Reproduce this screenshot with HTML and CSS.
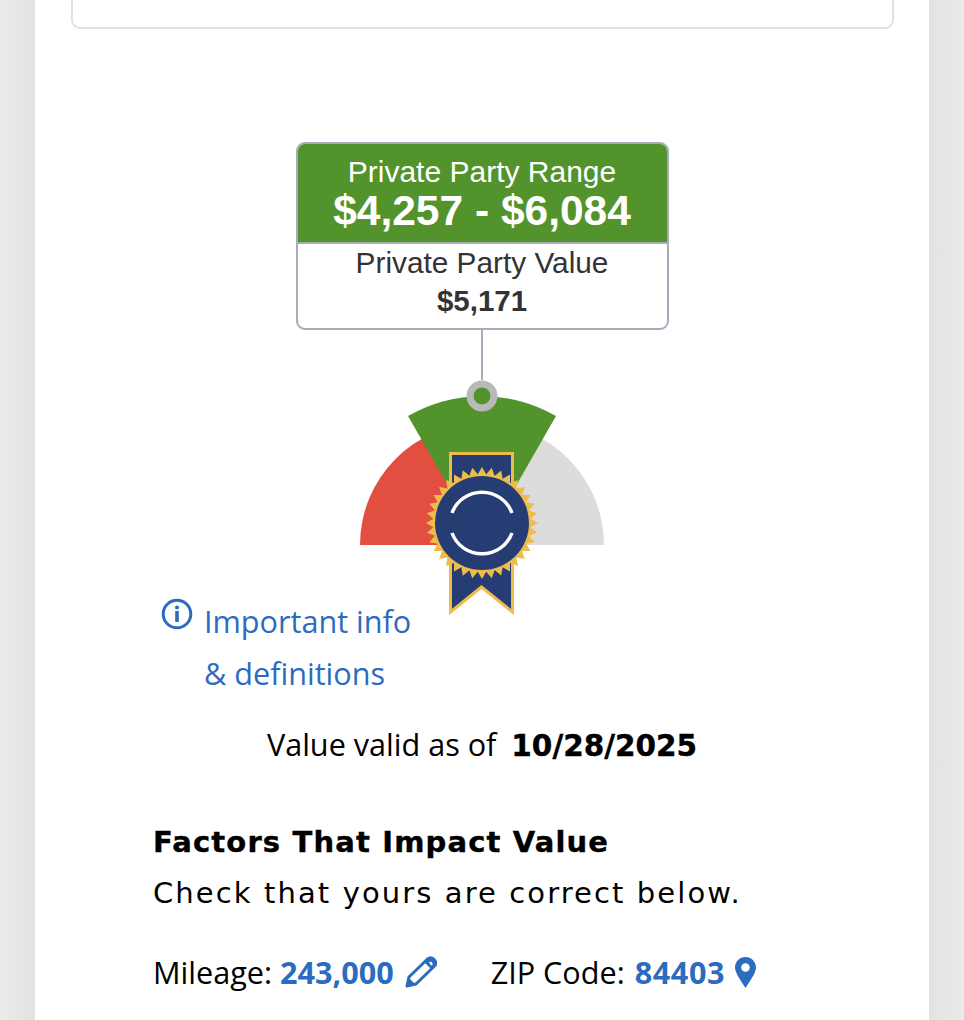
FILE: index.html
```html
<!DOCTYPE html>
<html lang="en">
<head>
  <meta charset="UTF-8">
  <meta name="viewport" content="width=device-width, initial-scale=1.0">
  <title>Private Party Value</title>
  <link rel="stylesheet" href="styles.css">
</head>
<body>
  <main class="page">
    <div class="card-stub"></div>

    <section class="value-box">
      <div class="value-box-head">
        <div class="range-label">Private Party Range</div>
        <div class="range-value">$4,257 - $6,084</div>
      </div>
      <div class="value-box-body">
        <div class="value-label">Private Party Value</div>
        <div class="value-amount">$5,171</div>
      </div>
    </section>
    <div class="connector"></div>

    <div class="chart">
      <!-- gauge and ribbon badge, origin is 360,380 on the page -->
      <svg class="gauge" width="244" height="236" viewBox="0 0 244 236" xmlns="http://www.w3.org/2000/svg">
        <path fill="#e24e3f" d="M0 165 A122 122 0 0 1 122 43 L122 165 Z"/>
        <path fill="#dcdcdc" d="M244 165 A122 122 0 0 0 122 43 L122 165 Z"/>
        <path fill="#52932b" d="M122 165 L48 36 A148 148 0 0 1 196 36 Z"/>
        <circle cx="122" cy="16" r="12" fill="#52932b" stroke="#b9b9b9" stroke-width="7"/>
        <polygon points="90.5,73.5 152.5,73.5 152.5,232 121.5,207 90.5,232" fill="#253d73" stroke="#eebc4a" stroke-width="3"/>
        <g fill="#eebc4a" transform="translate(122 143)">
          <polygon points="0,-56 48.5,28 -48.5,28"/>
          <polygon points="0,-56 48.5,28 -48.5,28" transform="rotate(10)"/>
          <polygon points="0,-56 48.5,28 -48.5,28" transform="rotate(20)"/>
          <polygon points="0,-56 48.5,28 -48.5,28" transform="rotate(30)"/>
          <polygon points="0,-56 48.5,28 -48.5,28" transform="rotate(40)"/>
          <polygon points="0,-56 48.5,28 -48.5,28" transform="rotate(50)"/>
          <polygon points="0,-56 48.5,28 -48.5,28" transform="rotate(60)"/>
          <polygon points="0,-56 48.5,28 -48.5,28" transform="rotate(70)"/>
          <polygon points="0,-56 48.5,28 -48.5,28" transform="rotate(80)"/>
          <polygon points="0,-56 48.5,28 -48.5,28" transform="rotate(90)"/>
          <polygon points="0,-56 48.5,28 -48.5,28" transform="rotate(100)"/>
          <polygon points="0,-56 48.5,28 -48.5,28" transform="rotate(110)"/>
        </g>
        <circle cx="122" cy="143" r="47" fill="#253d73"/>
        <path fill="none" stroke="#fff" stroke-width="3.5" d="M92 133 A32 32 0 0 1 152 133 M92 153 A32 32 0 0 0 152 153"/>
      </svg>

      <a class="info-link" href="#">
        <svg class="info-icon" width="32" height="32" viewBox="0 0 32 32" xmlns="http://www.w3.org/2000/svg">
          <circle cx="16" cy="16" r="13.8" fill="none" stroke="#2b6cbf" stroke-width="3"/>
          <circle cx="16" cy="9.5" r="2" fill="#2b6cbf"/>
          <rect x="14.2" y="13" width="3.6" height="11" fill="#2b6cbf"/>
        </svg>
        <span>Important info<br>&amp; definitions</span>
      </a>
    </div>

    <p class="valid-line">Value valid as of <strong>10/28/2025</strong></p>

    <section class="factors">
      <h2>Factors That Impact Value</h2>
      <p class="factors-sub">Check that yours are correct below.</p>
      <div class="factor-row">
        <div class="factor">Mileage: <a href="#">243,000</a>
          <svg class="factor-icon" width="32" height="32" viewBox="0 0 32 32" xmlns="http://www.w3.org/2000/svg">
            <path fill="none" stroke="#2b6cbf" stroke-width="3" stroke-linejoin="round" d="M2 30 L4 21 L22.5 3 Q25.5 0.5 28.5 3 L29.5 4 Q32 7 29.5 10 L11 28 Z"/>
            <path fill="#2b6cbf" d="M1 31 L3 21 L11 29 Z M19.5 6.5 L23 2.5 Q25.5 0.5 28.5 3 L29.5 4 Q32 7 29.5 10 L26.5 13.5 Z"/>
            <path fill="#fff" d="M24 6.5 A2 2 0 0 1 27 9.5 L25.8 9 Z"/>
          </svg>
        </div>
        <div class="factor factor-zip">ZIP Code: <a href="#">84403</a>
          <svg class="factor-icon" width="21" height="31" viewBox="0 0 21 31" xmlns="http://www.w3.org/2000/svg">
            <path fill="#2b6cbf" fill-rule="evenodd" d="M10.5 0 C4.7 0 0 4.7 0 10.5 C0 16 7 25.5 10.5 31 C14 25.5 21 16 21 10.5 C21 4.7 16.3 0 10.5 0 Z M10.5 6.2 A4.3 4.3 0 1 1 10.5 14.8 A4.3 4.3 0 1 1 10.5 6.2 Z"/>
          </svg>
        </div>
      </div>
    </section>
  </main>
</body>
</html>
```

FILE: styles.css
```css
body {
  margin: 0;
  height: 1020px;
  overflow: hidden;
  background: linear-gradient(90deg, #ebebeb 0, #e2e2e2 35px, #e2e2e2 929px, #ebebeb 100%);
  font-family: "Open Sans", sans-serif;
  color: #000;
}

a {
  color: #2b6cbf;
  text-decoration: none;
}

.page {
  display: flex;
  flex-direction: column;
  align-items: center;
  margin: 0 35px;
  height: 1020px;
  background: #fff;
}

.card-stub {
  box-sizing: border-box;
  align-self: stretch;
  height: 29px;
  margin: 0 35px 0 36px;
  border: 2px solid #e2e2e2;
  border-top: none;
  border-radius: 0 0 9px 9px;
}

.value-box {
  box-sizing: border-box;
  width: 373px;
  height: 188px;
  margin-top: 113px;
  border: 2px solid #a5adba;
  border-radius: 9px;
  overflow: hidden;
  font-family: "Liberation Sans", Arial, sans-serif;
  text-align: center;
}

.value-box-head {
  height: 100px;
  padding-top: 10px;
  box-sizing: border-box;
  background: #52932b;
  border-bottom: 2px solid #a5adba;
  color: #fff;
}

.range-label {
  font-size: 30px;
  line-height: 36px;
}

.range-value {
  font-size: 42.5px;
  line-height: 42px;
  font-weight: bold;
}

.value-box-body {
  color: #333;
}

.value-label {
  font-size: 29.8px;
  line-height: 37px;
}

.value-amount {
  font-size: 29.5px;
  line-height: 40px;
  font-weight: bold;
}

.connector {
  width: 2px;
  height: 50px;
  background: #a5adba;
}

.chart {
  display: grid;
  align-self: stretch;
}

.gauge,
.info-link {
  grid-area: 1 / 1;
}

.gauge {
  justify-self: center;
}

.info-link {
  display: flex;
  gap: 11px;
  justify-self: start;
  margin: 215px 0 0 126px;
  font-size: 30.6px;
  line-height: 52px;
}

.info-icon {
  margin-top: 3px;
}

.valid-line {
  margin: 25px 0 0;
  font-size: 30.6px;
  line-height: 40px;
}

.valid-line strong {
  margin-left: 7px;
  font-family: "DejaVu Sans", sans-serif;
  font-size: 29.5px;
  font-weight: 700;
  -webkit-text-stroke: 0.4px #000;
}

.factors {
  align-self: stretch;
  padding: 0 118px;
}

.factors h2 {
  margin: 56px 0 0;
  font-family: "DejaVu Sans", sans-serif;
  font-size: 29px;
  line-height: 40px;
  font-weight: 700;
  letter-spacing: 1.15px;
  -webkit-text-stroke: 0.4px #000;
}

.factors-sub {
  margin: 11px 0 0;
  font-family: "DejaVu Sans", sans-serif;
  font-size: 29px;
  line-height: 40px;
  letter-spacing: 2.1px;
}

.factor-row {
  display: flex;
  gap: 54px;
  margin-top: 39px;
}

.factor {
  display: flex;
  align-items: center;
  gap: 8px;
  font-size: 30.6px;
  line-height: 40px;
}

.factor a {
  font-weight: 700;
}

.factor-zip a {
  margin-left: 2px;
  letter-spacing: 0.6px;
}

.factor-icon {
  margin-left: 3px;
}

.factor-zip .factor-icon {
  margin-left: 2px;
}
```
